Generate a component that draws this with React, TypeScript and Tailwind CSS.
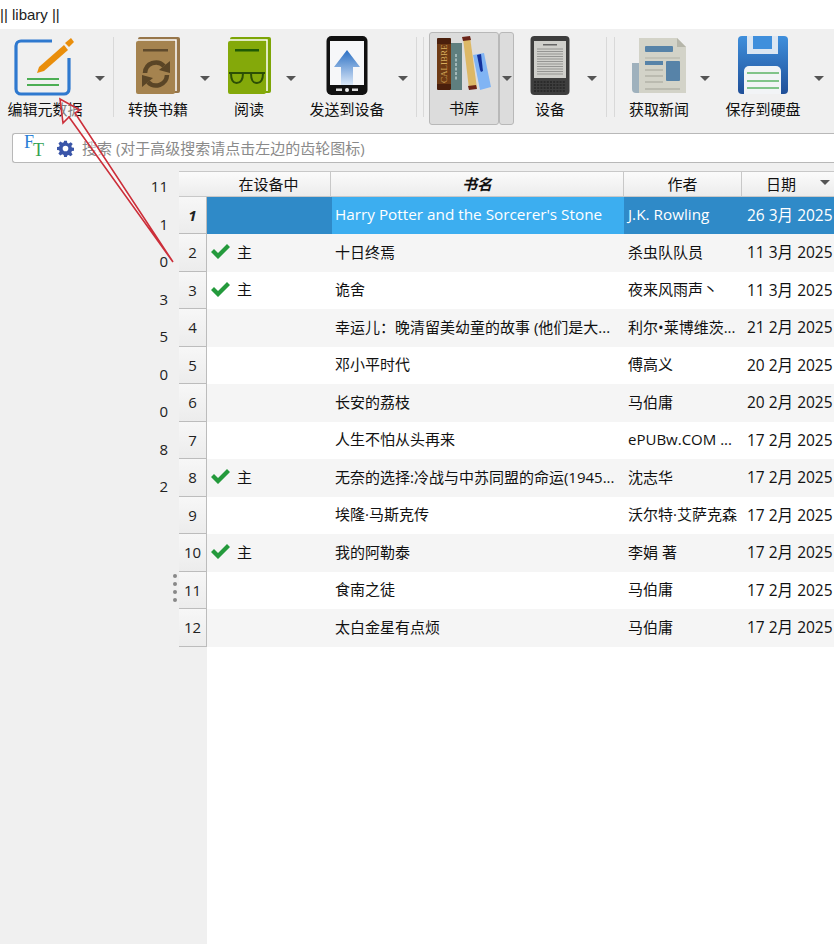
import { ReactNode } from "react";

const cjk = "font-['Open_Sans','Noto_Sans_CJK_SC',sans-serif]";

interface Book {
  title: string;
  author: string;
  date: string;
  onDevice?: boolean;
}

const books: Book[] = [
  { title: "Harry Potter and the Sorcerer's Stone", author: "J.K. Rowling", date: "26 3月 2025" },
  { title: "十日终焉", author: "杀虫队队员", date: "11 3月 2025", onDevice: true },
  { title: "诡舍", author: "夜来风雨声丶", date: "11 3月 2025", onDevice: true },
  { title: "幸运儿：晚清留美幼童的故事 (他们是大...", author: "利尔•莱博维茨...", date: "21 2月 2025" },
  { title: "邓小平时代", author: "傅高义", date: "20 2月 2025" },
  { title: "长安的荔枝", author: "马伯庸", date: "20 2月 2025" },
  { title: "人生不怕从头再来", author: "ePUBw.COM ...", date: "17 2月 2025" },
  { title: "无奈的选择:冷战与中苏同盟的命运(1945...", author: "沈志华", date: "17 2月 2025", onDevice: true },
  { title: "埃隆·马斯克传", author: "沃尔特·艾萨克森", date: "17 2月 2025" },
  { title: "我的阿勒泰", author: "李娟 著", date: "17 2月 2025", onDevice: true },
  { title: "食南之徒", author: "马伯庸", date: "17 2月 2025" },
  { title: "太白金星有点烦", author: "马伯庸", date: "17 2月 2025" },
];

const counts = ["11", "1", "0", "3", "5", "0", "0", "8", "2"];

const EditIcon = () => (
  <svg width="62" height="60" viewBox="0 0 62 60">
    <path d="M38 5H7a5 5 0 0 0-5 5v43a5 5 0 0 0 5 5h43a5 5 0 0 0 5-5V22" fill="none" stroke="#2f79cf" strokeWidth="3.2" />
    <path d="M23 37L25 31L50 9L54 14L30 35Z" fill="#e98e0c" />
    <path d="M51 7L57 2L60 6L55 11Z" fill="#e98e0c" />
    <path d="M13 43H45M13 49H45" stroke="#4cae54" strokeWidth="2" />
  </svg>
);

const ConvertIcon = () => (
  <svg width="46" height="60" viewBox="0 0 46 60">
    <rect x="3" y="1" width="42" height="56" rx="2" fill="#97764a" />
    <path d="M3 4H41V55" fill="none" stroke="#fff" strokeWidth="1.500" />
    <rect x="1" y="5" width="39" height="53" rx="2" fill="#a5834f" />
    <rect x="8" y="13" width="25" height="2.500" fill="#5f4a2c" />
    <path d="M10 37A11 11 0 0 1 29 30" fill="none" stroke="#5a4526" strokeWidth="4.500" />
    <path d="M24 34L35 37V25Z" fill="#5a4526" />
    <path d="M32 39A11 11 0 0 1 13 46" fill="none" stroke="#5a4526" strokeWidth="4.500" />
    <path d="M18 42L7 39V51Z" fill="#5a4526" />
  </svg>
);

const ReadIcon = () => (
  <svg width="44" height="60" viewBox="0 0 44 60">
    <rect x="3" y="1" width="41" height="56" rx="2" fill="#7da506" />
    <path d="M3 4H40V55" fill="none" stroke="#fff" strokeWidth="1.500" />
    <rect x="1" y="5" width="38" height="53" rx="2" fill="#84a90a" />
    <rect x="8" y="13" width="24" height="2.500" fill="#1f5a05" />
    <path d="M2 37H38" stroke="#2c4f05" strokeWidth="1.800" />
    <path d="M4 37h12c0 7-2 10-6.500 10S4 43 4 37ZM24 37h12c0 6-1.500 10-6 10s-6-3-6-10Z" fill="none" stroke="#2c4f05" strokeWidth="2" />
  </svg>
);

const SendIcon = () => (
  <svg width="42" height="60" viewBox="0 0 42 60">
    <defs>
      <linearGradient id="sendArrow" x1="0" y1="0" x2="0" y2="1">
        <stop offset="0" stopColor="#2a6fc4" />
        <stop offset="1" stopColor="#dbe8f8" />
      </linearGradient>
    </defs>
    <rect x="0.500" y="0" width="41" height="59" rx="5" fill="#111" />
    <rect x="4" y="5" width="34" height="44" fill="#f6f7f9" />
    <path d="M21 14L34 31H27V49H15V31H8Z" fill="url(#sendArrow)" />
    <rect x="10" y="52.500" width="6" height="2.500" fill="#ddd" />
    <circle cx="21" cy="54" r="2" fill="#eee" />
    <rect x="26" y="52.500" width="6" height="2.500" fill="#ddd" />
  </svg>
);

const LibraryIcon = () => (
  <svg width="56" height="56" viewBox="0 0 56 56">
    <rect x="1" y="2" width="14" height="52" rx="1" fill="#4a1f0c" />
    <rect x="1" y="8" width="14" height="40" fill="#6e3a14" />
    <text x="-47" y="11" transform="rotate(-90)" fontSize="9" fill="#d9ad5c" fontFamily="'Liberation Serif',serif">CALIBRE</text>
    <rect x="15" y="7" width="11" height="47" fill="#5f7f7f" />
    <path d="M20 18V44" stroke="#b9cccc" strokeWidth="1.500" strokeDasharray="3 1.500" />
    <path d="M27 2L34 1L41 52L33 53Z" fill="#dcb866" />
    <path d="M26 1L34 0L35 4L27 5ZM32 50L40 49L41 53L33 54Z" fill="#6a2418" />
    <path d="M37 19L48 17L55 51L44 54Z" fill="#80b4f4" />
    <path d="M41 19L45 18L47 35L45 36L44 34Z" fill="#12309c" />
  </svg>
);

const DeviceIcon = () => (
  <svg width="40" height="60" viewBox="0 0 40 60">
    <rect x="0.500" y="0" width="39" height="59" rx="4" fill="#3e3e3e" />
    <rect x="4" y="5" width="32" height="37" fill="#cfcfcb" />
    <rect x="13" y="8" width="14" height="1.500" fill="#666" />
    <path d="M7 13H33M7 15.500H33M7 18H33M7 20.500H33M7 23H33M7 25.500H33M7 28H33M7 30.500H33M7 33H33M7 35.500H33M7 38H33" stroke="#8f8f8c" strokeWidth="0.900" />
    <path d="M4 46H36M4 49H36M4 52H36M4 55H36" stroke="#262626" strokeWidth="1.400" strokeDasharray="2 1.200" />
  </svg>
);

const NewsIcon = () => (
  <svg width="56" height="58" viewBox="0 0 56 58">
    <path d="M1 26H8V56H5a4 4 0 0 1-4-4Z" fill="#9fb1bd" />
    <path d="M8 1H46L55 10V56H8Z" fill="#d3d3c8" />
    <path d="M46 1L55 10H46Z" fill="#b6b6aa" />
    <rect x="14" y="9" width="28" height="6" rx="1" fill="#5783a8" />
    <path d="M14 21H49" stroke="#b4b4a8" strokeWidth="1.200" />
    <rect x="14" y="24" width="18" height="4" fill="#5783a8" />
    <rect x="35" y="24" width="14" height="20" rx="1" fill="#5783a8" />
    <path d="M14 33H32M14 39H32M14 45H32M14 52H49" stroke="#b4b4a8" strokeWidth="1.600" />
  </svg>
);

const SaveIcon = () => (
  <svg width="50" height="60" viewBox="0 0 50 60">
    <defs>
      <linearGradient id="saveBody" x1="0" y1="0" x2="0" y2="1">
        <stop offset="0" stopColor="#3f8fdc" />
        <stop offset="1" stopColor="#1f4f98" />
      </linearGradient>
    </defs>
    <path d="M4 0H46a4 4 0 0 1 4 4V54a4 4 0 0 1-4 4H4a4 4 0 0 1-4-4V4a4 4 0 0 1 4-4Z" fill="url(#saveBody)" />
    <path d="M9 0H40V18H9Z" fill="#dbe6f2" />
    <rect x="15" y="0" width="19" height="13" fill="#3f8fdc" />
    <path d="M11 30H38a5 5 0 0 1 5 5V58H6V35a5 5 0 0 1 5-5Z" fill="#f2f4f6" />
    <path d="M9 37H41M9 45H41M9 52H41" stroke="#5cb467" strokeWidth="1.300" />
  </svg>
);

const GreenCheck = () => (
  <svg width="19" height="15" viewBox="0 0 19 15">
    <path d="M0 8L3 5L7 9L16 0L19 3L7 15Z" fill="#249a3c" />
  </svg>
);

const DropArrow = () => (
  <div className="w-0 h-0 border-x-[5px] border-x-transparent border-t-[5px] border-t-[#555]" />
);

const Tool = ({ icon, label, col, arrow }: { icon: ReactNode; label: string; col: string; arrow: string }) => (
  <div className="flex shrink-0">
    <div className={`${col} h-[104px] flex flex-col items-center`}>
      <div className="h-[62px] mt-[6px] flex items-center justify-center">{icon}</div>
      <div className="mt-[2px] text-[15px] leading-5 text-[#111] whitespace-nowrap">{label}</div>
    </div>
    <div className={`${arrow} h-[104px] flex justify-center pt-[47px]`}>
      <DropArrow />
    </div>
  </div>
);

const Separator = ({ className }: { className: string }) => (
  <div className={`${className} w-px h-[80px] mt-[8px] bg-[#d9d9d9] shrink-0`} />
);

const App = () => {
  return (
    <div className={`${cjk} relative w-[834px] h-[944px] overflow-hidden bg-[#f0f0f0] flex flex-col`}>
      <div className="h-[29px] bg-white text-[15px] leading-[30px] text-[#222] font-['Liberation_Sans',sans-serif]">|| libary ||</div>

      {/* Toolbar */}
      <div className="h-[104px] flex bg-[#f0f0f0]">
        <Tool icon={<EditIcon />} label="编辑元数据" col="w-[90px]" arrow="w-[20px]" />
        <Separator className="ml-[3px] mr-[4px]" />
        <Tool icon={<ConvertIcon />} label="转换书籍" col="w-[80px]" arrow="w-[14px]" />
        <Tool icon={<ReadIcon />} label="阅读" col="w-[74px]" arrow="w-[10px]" />
        <Tool icon={<SendIcon />} label="发送到设备" col="w-[102px]" arrow="w-[10px]" />
        <Separator className="ml-[8px] mr-[6px]" />
        <Separator className="mr-[5px]" />
        <div className="flex shrink-0 h-[93px] mt-[3px]">
          <div className="w-[70px] bg-[#dcdcdc] border border-[#b8b8b8] rounded-[3px] flex flex-col items-center">
            <div className="h-[56px] mt-[3px]">
              <LibraryIcon />
            </div>
            <div className="mt-[6px] text-[15px] leading-5 text-[#111]">书库</div>
          </div>
          <div className="w-[15px] bg-[#dcdcdc] border border-[#b8b8b8] rounded-[3px] flex justify-center pt-[43px]">
            <DropArrow />
          </div>
        </div>
        <Tool icon={<DeviceIcon />} label="设备" col="w-[72px]" arrow="w-[12px]" />
        <Separator className="ml-[8px] mr-[7px]" />
        <Separator className="mr-[5px]" />
        <Tool icon={<NewsIcon />} label="获取新闻" col="w-[78px]" arrow="w-[14px]" />
        <Tool icon={<SaveIcon />} label="保存到硬盘" col="w-[102px]" arrow="w-[10px]" />
      </div>

      {/* Search */}
      <div className="h-[30px] pl-[12px] shrink-0">
        <div className="h-[30px] bg-white border-y border-l border-[#b8b8b8] rounded-l-[3px] flex items-center">
          <div className="w-[32px] pl-[11px] flex font-['Liberation_Serif',serif] text-[18px] leading-none">
            <span className="text-[#2a7fd6] -mt-[4px]">F</span>
            <span className="text-[#35a353] mt-[4px] -ml-[1px]">T</span>
          </div>
          <svg className="ml-[12px]" width="17" height="17" viewBox="0 0 24 24">
            <path
              fill="#3a55a8"
              fillRule="evenodd"
              d="M10 1h4l.6 3.200 2 .8L19.400 3l2.800 2.800-2 2.800.8 2 3 .4v4l-3 .6-.8 2 1.800 2.700-2.800 2.800-2.800-1.900-2 .8L14 24h-4l-.5-3-2-.8L4.700 22l-2.800-2.800 1.900-2.700-.8-2L0 14v-4l3-.5.8-2L2 4.800 4.800 2l2.700 2 2-.8ZM12 8a4 4 0 1 0 0 8 4 4 0 0 0 0-8Z"
            />
          </svg>
          <span className="ml-[8px] text-[15px] text-[#8a8a8a] whitespace-nowrap">搜索 (对于高级搜索请点击左边的齿轮图标)</span>
        </div>
      </div>

      {/* Main */}
      <div className="flex-1 flex min-h-0">
        <div className="relative w-[179px] shrink-0 pt-[4.500px] pr-[11px]">
          {counts.map((count, i) => (
            <div key={i} className="h-[37.5px] flex items-center justify-end text-[15px] text-[#222]">
              {count}
            </div>
          ))}
          <div className="absolute left-[173px] top-[411px] flex flex-col gap-[4px]">
            <div className="w-[4px] h-[4px] rounded-full bg-[#888]" />
            <div className="w-[4px] h-[4px] rounded-full bg-[#888]" />
            <div className="w-[4px] h-[4px] rounded-full bg-[#888]" />
            <div className="w-[4px] h-[4px] rounded-full bg-[#888]" />
          </div>
        </div>

        <div className="flex-1 pt-[8px] flex flex-col min-w-0">
          {/* Header */}
          <div className="h-[25.5px] flex border-y border-[#c8c8c8] bg-gradient-to-b from-[#fbfbfb] to-[#ececec] text-[15px] text-[#111]">
            <div className="w-[152px] border-r border-[#c8c8c8] flex items-center justify-center pl-[28px]">在设备中</div>
            <div className="w-[293px] border-r border-[#c8c8c8] flex items-center justify-center font-bold italic">书名</div>
            <div className="w-[118px] border-r border-[#c8c8c8] flex items-center justify-center">作者</div>
            <div className="relative flex-1 flex items-center pl-[24px]">
              日期
              <div className="absolute right-[4px] top-[8px] w-0 h-0 border-x-[5px] border-x-transparent border-t-[5px] border-t-[#555]" />
            </div>
          </div>

          {/* Rows */}
          <div className="flex-1 bg-white relative">
            <div className="absolute left-0 top-0 bottom-0 w-[28px] bg-[#f0f0f0]" />
            <div className="relative">
              {books.map((book, i) => {
                const selected = i === 0;
                const rowBg = selected ? "bg-[#2f8ac8] text-white text-[15.300px]" : i % 2 === 1 ? "bg-[#f5f5f5] text-[#111]" : "bg-white text-[#111]";
                return (
                  <div key={i} className="h-[37.5px] flex text-[15px]">
                    <div
                      className={`w-[28px] shrink-0 flex items-center justify-center bg-gradient-to-b from-[#f7f7f7] to-[#ececec] border-b border-r border-[#bcbcbc] text-[15px] text-[#222] ${
                        selected ? "font-bold italic" : ""
                      }`}
                    >
                      {i + 1}
                    </div>
                    <div className={`${rowBg} flex flex-1 min-w-0`}>
                      <div className="w-[125px] shrink-0 flex items-center pl-[4px] pb-[2px]">
                        {book.onDevice && (
                          <>
                            <GreenCheck />
                            <span className="ml-[7px]">主</span>
                          </>
                        )}
                      </div>
                      <div className={`w-[292px] shrink-0 flex items-center pl-[3px] pb-[2px] whitespace-nowrap overflow-hidden ${selected ? "bg-[#3caef0]" : ""}`}>
                        {book.title}
                      </div>
                      <div className="w-[118px] shrink-0 flex items-center pl-[4px] pb-[2px] whitespace-nowrap">{book.author}</div>
                      <div className="flex-1 flex items-center pl-[5px] whitespace-nowrap text-[15.500px]">{book.date}</div>
                    </div>
                  </div>
                );
              })}
            </div>
          </div>
        </div>
      </div>

      {/* Annotation arrow */}
      <svg className="absolute left-0 top-0 pointer-events-none" width="200" height="280" viewBox="0 0 200 280">
        <path d="M60 99L63 123L69 117L173 262L75 113L80 110Z" fill="#fff" fillOpacity="0.45" stroke="#cc2f3a" strokeWidth="1.600" />
      </svg>
    </div>
  );
};

export default App;
